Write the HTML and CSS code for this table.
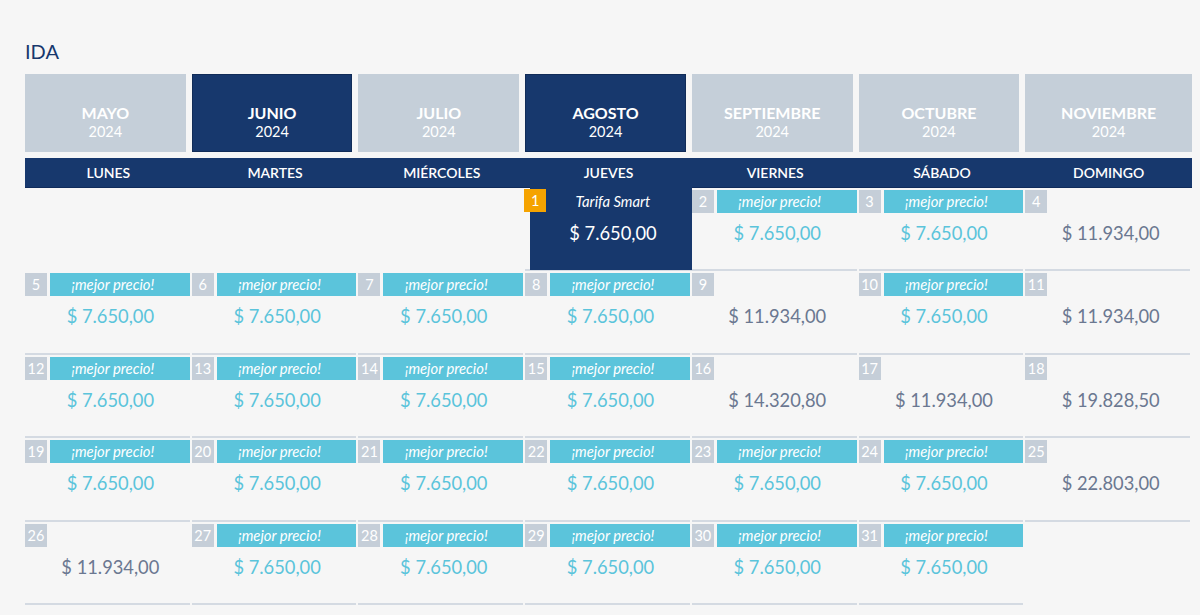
FILE: index.html
```html
<!DOCTYPE html>
<html lang="es">
<head>
<meta charset="utf-8">
<title>IDA</title>
<link rel="stylesheet" href="styles.css">
</head>
<body>
<div class="page">
  <h2 class="title">IDA</h2>
  <div class="months">
    <div class="month"><span class="m-name">MAYO</span><span class="m-year">2024</span></div>
    <div class="month active"><span class="m-name">JUNIO</span><span class="m-year">2024</span></div>
    <div class="month"><span class="m-name">JULIO</span><span class="m-year">2024</span></div>
    <div class="month active"><span class="m-name">AGOSTO</span><span class="m-year">2024</span></div>
    <div class="month"><span class="m-name">SEPTIEMBRE</span><span class="m-year">2024</span></div>
    <div class="month"><span class="m-name">OCTUBRE</span><span class="m-year">2024</span></div>
    <div class="month last"><span class="m-name">NOVIEMBRE</span><span class="m-year">2024</span></div>
  </div>
  <div class="weekdays">
    <div>LUNES</div><div>MARTES</div><div>MIÉRCOLES</div><div>JUEVES</div><div>VIERNES</div><div>SÁBADO</div><div>DOMINGO</div>
  </div>
  <div class="grid">
    <div class="cell empty"></div>
    <div class="cell empty"></div>
    <div class="cell empty"></div>
    <div class="cell selected">
      <div class="sel-box"><div class="sel-label">Tarifa Smart</div><div class="price">$ 7.650,00</div></div>
      <span class="num orange">1</span>
    </div>
    <div class="cell"><div class="top"><span class="num">2</span><span class="tag">¡mejor precio!</span></div><div class="price best">$ 7.650,00</div></div>
    <div class="cell"><div class="top"><span class="num">3</span><span class="tag">¡mejor precio!</span></div><div class="price best">$ 7.650,00</div></div>
    <div class="cell"><div class="top"><span class="num">4</span></div><div class="price">$ 11.934,00</div></div>

    <div class="cell"><div class="top"><span class="num">5</span><span class="tag">¡mejor precio!</span></div><div class="price best">$ 7.650,00</div></div>
    <div class="cell"><div class="top"><span class="num">6</span><span class="tag">¡mejor precio!</span></div><div class="price best">$ 7.650,00</div></div>
    <div class="cell"><div class="top"><span class="num">7</span><span class="tag">¡mejor precio!</span></div><div class="price best">$ 7.650,00</div></div>
    <div class="cell"><div class="top"><span class="num">8</span><span class="tag">¡mejor precio!</span></div><div class="price best">$ 7.650,00</div></div>
    <div class="cell"><div class="top"><span class="num">9</span></div><div class="price">$ 11.934,00</div></div>
    <div class="cell"><div class="top"><span class="num">10</span><span class="tag">¡mejor precio!</span></div><div class="price best">$ 7.650,00</div></div>
    <div class="cell"><div class="top"><span class="num">11</span></div><div class="price">$ 11.934,00</div></div>

    <div class="cell"><div class="top"><span class="num">12</span><span class="tag">¡mejor precio!</span></div><div class="price best">$ 7.650,00</div></div>
    <div class="cell"><div class="top"><span class="num">13</span><span class="tag">¡mejor precio!</span></div><div class="price best">$ 7.650,00</div></div>
    <div class="cell"><div class="top"><span class="num">14</span><span class="tag">¡mejor precio!</span></div><div class="price best">$ 7.650,00</div></div>
    <div class="cell"><div class="top"><span class="num">15</span><span class="tag">¡mejor precio!</span></div><div class="price best">$ 7.650,00</div></div>
    <div class="cell"><div class="top"><span class="num">16</span></div><div class="price">$ 14.320,80</div></div>
    <div class="cell"><div class="top"><span class="num">17</span></div><div class="price">$ 11.934,00</div></div>
    <div class="cell"><div class="top"><span class="num">18</span></div><div class="price">$ 19.828,50</div></div>

    <div class="cell"><div class="top"><span class="num">19</span><span class="tag">¡mejor precio!</span></div><div class="price best">$ 7.650,00</div></div>
    <div class="cell"><div class="top"><span class="num">20</span><span class="tag">¡mejor precio!</span></div><div class="price best">$ 7.650,00</div></div>
    <div class="cell"><div class="top"><span class="num">21</span><span class="tag">¡mejor precio!</span></div><div class="price best">$ 7.650,00</div></div>
    <div class="cell"><div class="top"><span class="num">22</span><span class="tag">¡mejor precio!</span></div><div class="price best">$ 7.650,00</div></div>
    <div class="cell"><div class="top"><span class="num">23</span><span class="tag">¡mejor precio!</span></div><div class="price best">$ 7.650,00</div></div>
    <div class="cell"><div class="top"><span class="num">24</span><span class="tag">¡mejor precio!</span></div><div class="price best">$ 7.650,00</div></div>
    <div class="cell"><div class="top"><span class="num">25</span></div><div class="price">$ 22.803,00</div></div>

    <div class="cell"><div class="top"><span class="num">26</span></div><div class="price">$ 11.934,00</div></div>
    <div class="cell"><div class="top"><span class="num">27</span><span class="tag">¡mejor precio!</span></div><div class="price best">$ 7.650,00</div></div>
    <div class="cell"><div class="top"><span class="num">28</span><span class="tag">¡mejor precio!</span></div><div class="price best">$ 7.650,00</div></div>
    <div class="cell"><div class="top"><span class="num">29</span><span class="tag">¡mejor precio!</span></div><div class="price best">$ 7.650,00</div></div>
    <div class="cell"><div class="top"><span class="num">30</span><span class="tag">¡mejor precio!</span></div><div class="price best">$ 7.650,00</div></div>
    <div class="cell"><div class="top"><span class="num">31</span><span class="tag">¡mejor precio!</span></div><div class="price best">$ 7.650,00</div></div>
    <div class="cell empty"></div>
  </div>
</div>
</body>
</html>
```
FILE: styles.css
```css
* { box-sizing: border-box; }
html, body { margin: 0; padding: 0; }
body {
  background: #f6f6f6;
  font-family: Lato, "Open Sans", "Liberation Sans", sans-serif;
  width: 1200px;
  height: 615px;
  overflow: hidden;
}
.page {
  padding: 39px 8px 0 25px;
}
.title {
  margin: 0 0 11px 0;
  font-size: 20px;
  line-height: 24px;
  font-weight: 400;
  color: #17386d;
}
.months {
  display: grid;
  grid-template-columns: repeat(7, 1fr);
}
.month {
  height: 78px;
  margin-right: 6px;
  background: #c5cfd9;
  color: #fff;
  display: flex;
  flex-direction: column;
  align-items: center;
  padding-top: 29px;
}
.month.last { margin-right: 0; }
.month.active {
  background: #17386d;
  border: 1px solid #112c58;
  padding-top: 28px;
}
.m-name {
  font-size: 16px;
  font-weight: 700;
  line-height: 20px;
}
.m-year {
  font-size: 14.5px;
  line-height: 18px;
}
.weekdays {
  margin-top: 6px;
  height: 30px;
  background: #17386d;
  display: grid;
  grid-template-columns: repeat(7, 1fr);
  color: #fff;
  font-size: 14px;
  font-weight: 600;
  line-height: 30px;
  text-align: center;
  border-bottom: 1px solid #0f2b5b;
}
.grid {
  display: grid;
  grid-template-columns: repeat(7, 1fr);
  grid-auto-rows: 83.4px;
}
.cell {
  position: relative;
  margin-right: 2px;
  padding-top: 2px;
  border-bottom: 2px solid #d4dae2;
}
.cell.empty { border-bottom: none; }
.top {
  display: flex;
  height: 23px;
}
.num {
  width: 22px;
  height: 23px;
  flex: none;
  background: #c5ced8;
  color: #fff;
  font-size: 14.5px;
  line-height: 23px;
  text-align: center;
}
.num.orange {
  position: absolute;
  left: -1px;
  top: 2px;
  background: #f5a300;
}
.tag {
  flex: 1;
  margin-left: 3px;
  background: #5bc4db;
  color: #fff;
  font-style: italic;
  font-size: 14.8px;
  line-height: 23px;
  text-align: center;
  padding-right: 14px;
}
.price {
  margin-top: 8px;
  padding-left: 6px;
  font-size: 18.3px;
  line-height: 24px;
  text-align: center;
  color: #6b7891;
}
.price.best { color: #5bc4db; }
.selected {
  margin-right: 0;
  padding-top: 0;
  margin-top: -1px;
}
.sel-box {
  margin-left: 5px;
  height: 83px;
  background: #17386d;
  color: #fff;
  padding-top: 3px;
}
.sel-label {
  font-style: italic;
  font-size: 14.8px;
  line-height: 23px;
  text-align: center;
  padding-left: 4px;
}
.sel-box .price {
  color: #fff;
  padding-left: 4px;
}
```
